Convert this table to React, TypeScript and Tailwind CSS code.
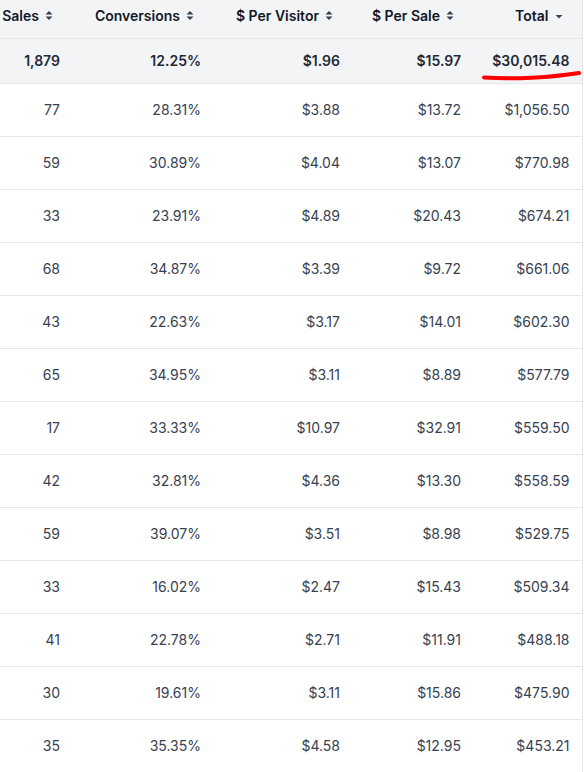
import React from "react";

type Row = [string, string, string, string, string];

const rows: Row[] = [
  ["77", "28.31%", "$3.88", "$13.72", "$1,056.50"],
  ["59", "30.89%", "$4.04", "$13.07", "$770.98"],
  ["33", "23.91%", "$4.89", "$20.43", "$674.21"],
  ["68", "34.87%", "$3.39", "$9.72", "$661.06"],
  ["43", "22.63%", "$3.17", "$14.01", "$602.30"],
  ["65", "34.95%", "$3.11", "$8.89", "$577.79"],
  ["17", "33.33%", "$10.97", "$32.91", "$559.50"],
  ["42", "32.81%", "$4.36", "$13.30", "$558.59"],
  ["59", "39.07%", "$3.51", "$8.98", "$529.75"],
  ["33", "16.02%", "$2.47", "$15.43", "$509.34"],
  ["41", "22.78%", "$2.71", "$11.91", "$488.18"],
  ["30", "19.61%", "$3.11", "$15.86", "$475.90"],
  ["35", "35.35%", "$4.58", "$12.95", "$453.21"],
];

function SortIcon() {
  return (
    <svg width="8" height="11" viewBox="0 0 8 11" className="ml-[6px] shrink-0" fill="#374151">
      <polygon points="0.5,4.6 4,1 7.5,4.6" />
      <polygon points="0.5,6.4 4,10 7.5,6.4" />
    </svg>
  );
}

function CaretDown() {
  return (
    <svg width="8" height="11" viewBox="0 0 8 11" className="ml-[6px] shrink-0" fill="#374151">
      <polygon points="0.5,5 4,8.6 7.5,5" />
    </svg>
  );
}

const headers: { label: string; sorted?: boolean }[] = [
  { label: "Sales" },
  { label: "Conversions" },
  { label: "$ Per Visitor" },
  { label: "$ Per Sale" },
  { label: "Total", sorted: true },
];

export default function App() {
  return (
    <div className="w-[584px] h-[772px] overflow-hidden bg-white" style={{ fontFamily: "Inter, 'Noto Sans', sans-serif" }}>
      <table className="table-fixed border-collapse w-[582px] border-r border-[#e5e7eb]">
        <colgroup>
          <col className="w-[72px]" />
          <col className="w-[141px]" />
          <col className="w-[139px]" />
          <col className="w-[121px]" />
          <col className="w-[109px]" />
        </colgroup>
        <thead>
          <tr className="h-[38px] bg-[#f3f4f6] border-b border-[#e5e7eb]">
            {headers.map((h) => (
              <th key={h.label} className="pr-[19px] pb-[6px] p-0 text-[14px] font-semibold text-[#111827] whitespace-nowrap">
                <div className="flex items-center justify-end">
                  <span>{h.label}</span>
                  {h.sorted ? <CaretDown /> : <SortIcon />}
                </div>
              </th>
            ))}
          </tr>
        </thead>
        <tbody>
          <tr className="h-[45px] bg-[#f3f4f6] border-b border-[#e5e7eb] text-[14px] font-semibold text-[#1f2937]">
            <td className="text-right pr-3">1,879</td>
            <td className="text-right pr-3">12.25%</td>
            <td className="text-right pr-3">$1.96</td>
            <td className="text-right pr-3">$15.97</td>
            <td className="text-right pr-3 relative">
              $30,015.48
              <svg width="110" height="45" viewBox="0 0 110 45" className="absolute top-0 left-0 pointer-events-none overflow-visible">
                <path d="M11 38.5 C 40 40.5, 78 38.5, 106 34" stroke="#ff0000" strokeWidth="4" strokeLinecap="round" fill="none" />
              </svg>
            </td>
          </tr>
          {rows.map((r, i) => (
            <tr key={i} className="h-[53px] border-b border-[#e5e7eb] text-[14px] text-[#374151]">
              {r.map((c, j) => (
                <td key={j} className="text-right pr-3">
                  {c}
                </td>
              ))}
            </tr>
          ))}
        </tbody>
      </table>
    </div>
  );
}
